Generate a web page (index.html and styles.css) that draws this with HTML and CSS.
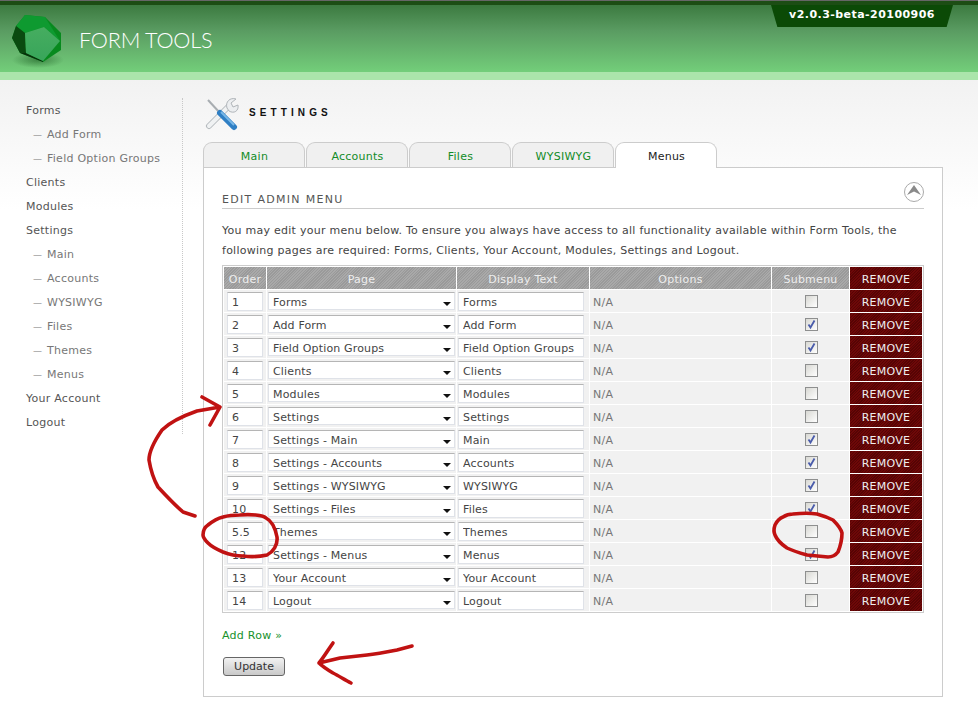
FILE: index.html
```html
<!DOCTYPE html>
<html lang="en">
<head>
<meta charset="utf-8">
<title>Form Tools - Settings</title>
<link rel="stylesheet" href="styles.css">
</head>
<body>
<header class="header">
  <svg class="logo" width="65" height="65" viewBox="5 8 65 65">
    <defs>
      <linearGradient id="face" x1="0" y1="0" x2="0" y2="1"><stop offset="0" stop-color="#46ad60"/><stop offset="1" stop-color="#38a55a"/></linearGradient>
      <radialGradient id="shade"><stop offset="0" stop-color="#0b4a12" stop-opacity=".5"/><stop offset="1" stop-color="#0b4a12" stop-opacity="0"/></radialGradient>
    </defs>
    <ellipse cx="38" cy="60" rx="26" ry="8" fill="url(#shade)"/>
    <polygon points="25,15 45,17 61,33 61,50 43,62 20,53 12,38 16,26" fill="#078a1e"/>
    <polygon points="25,15 45,17 60,41 44,27 25,33 16,26" fill="#0e9a30"/>
    <polygon points="16,26 25,33 26,53 20,53 12,38" fill="#0a4a10"/>
    <polygon points="26,53 43,61 43,62 20,53" fill="#07300a"/>
    <polygon points="25,33 44,27 60,41 43,61 26,53" fill="url(#face)"/>
  </svg>
  <div class="brand">FORM TOOLS</div>
  <div class="version">v2.0.3-beta-20100906</div>
</header>
<div class="strip"></div>
<main class="main">
  <nav class="side">
    <a class="nav">Forms</a>
    <a class="nav sub">Add Form</a>
    <a class="nav sub">Field Option Groups</a>
    <a class="nav">Clients</a>
    <a class="nav">Modules</a>
    <a class="nav">Settings</a>
    <a class="nav sub">Main</a>
    <a class="nav sub">Accounts</a>
    <a class="nav sub">WYSIWYG</a>
    <a class="nav sub">Files</a>
    <a class="nav sub">Themes</a>
    <a class="nav sub">Menus</a>
    <a class="nav">Your Account</a>
    <a class="nav">Logout</a>
  </nav>
  <section class="content">
    <div class="title-row">
      <svg class="tool-icon" width="34" height="34" viewBox="0 0 34 34">
        <path d="M4 29 L24 9" stroke="#b4b9bd" stroke-width="6" stroke-linecap="round"/>
        <path d="M4 29 L24 9" stroke="#f0f2f3" stroke-width="4" stroke-linecap="round"/>
        <path d="M22 11 C20 5 25 0 31 2 L26 6 L28 10 L33 8 C34 14 29 17 24 14 Z" fill="#eceef0" stroke="#b0b5b9" stroke-width="1"/>
        <path d="M3 3 L15 16" stroke="#a8adb1" stroke-width="2"/>
        <path d="M15 16 L29 30" stroke="#2f7fc4" stroke-width="6" stroke-linecap="round"/>
        <path d="M16 15 L29 28" stroke="#78b8e8" stroke-width="2"/>
      </svg>
      <h1 class="page-title">SETTINGS</h1>
    </div>
    <div class="tabs">
      <a class="tab">Main</a>
      <a class="tab">Accounts</a>
      <a class="tab">Files</a>
      <a class="tab">WYSIWYG</a>
      <a class="tab active">Menus</a>
    </div>
    <div class="panel">
      <div class="panel-head">
        <h2 class="panel-title">EDIT ADMIN MENU</h2>
        <svg class="up" width="22" height="22" viewBox="0 0 22 22">
          <circle cx="11" cy="11" r="9.5" fill="#fff" stroke="#aaa" stroke-width="1"/>
          <path d="M11 4 L18 14 L11 10.5 L4 14 Z" fill="#8a8a8a"/>
        </svg>
      </div>
      <p class="intro">You may edit your menu below. To ensure you always have access to all functionality available within Form Tools, the following pages are required: Forms, Clients, Your Account, Modules, Settings and Logout.</p>
      <table class="menu">
        <colgroup><col class="c1"><col class="c2"><col class="c3"><col class="c4"><col class="c5"><col class="c6"></colgroup>
        <thead>
          <tr><th>Order</th><th>Page</th><th>Display Text</th><th>Options</th><th>Submenu</th><th class="rm">REMOVE</th></tr>
        </thead>
        <tbody id="rows">
          <tr><td><input class="ord" value="1"></td><td><div class="sel"><select><option>Forms</option></select></div></td><td><input class="disp" value="Forms"></td><td class="na">N/A</td><td class="ck"><span class="box"></span></td><td class="rm">REMOVE</td></tr>
          <tr><td><input class="ord" value="2"></td><td><div class="sel"><select><option>Add Form</option></select></div></td><td><input class="disp" value="Add Form"></td><td class="na">N/A</td><td class="ck"><span class="box"><svg width="11" height="11" viewBox="0 0 11 11"><path d="M2.5 5.5 L4.5 8.5 L8.5 1.5" class="tick"/></svg></span></td><td class="rm">REMOVE</td></tr>
          <tr><td><input class="ord" value="3"></td><td><div class="sel"><select><option>Field Option Groups</option></select></div></td><td><input class="disp" value="Field Option Groups"></td><td class="na">N/A</td><td class="ck"><span class="box"><svg width="11" height="11" viewBox="0 0 11 11"><path d="M2.5 5.5 L4.5 8.5 L8.5 1.5" class="tick"/></svg></span></td><td class="rm">REMOVE</td></tr>
          <tr><td><input class="ord" value="4"></td><td><div class="sel"><select><option>Clients</option></select></div></td><td><input class="disp" value="Clients"></td><td class="na">N/A</td><td class="ck"><span class="box"></span></td><td class="rm">REMOVE</td></tr>
          <tr><td><input class="ord" value="5"></td><td><div class="sel"><select><option>Modules</option></select></div></td><td><input class="disp" value="Modules"></td><td class="na">N/A</td><td class="ck"><span class="box"></span></td><td class="rm">REMOVE</td></tr>
          <tr><td><input class="ord" value="6"></td><td><div class="sel"><select><option>Settings</option></select></div></td><td><input class="disp" value="Settings"></td><td class="na">N/A</td><td class="ck"><span class="box"></span></td><td class="rm">REMOVE</td></tr>
          <tr><td><input class="ord" value="7"></td><td><div class="sel"><select><option>Settings - Main</option></select></div></td><td><input class="disp" value="Main"></td><td class="na">N/A</td><td class="ck"><span class="box"><svg width="11" height="11" viewBox="0 0 11 11"><path d="M2.5 5.5 L4.5 8.5 L8.5 1.5" class="tick"/></svg></span></td><td class="rm">REMOVE</td></tr>
          <tr><td><input class="ord" value="8"></td><td><div class="sel"><select><option>Settings - Accounts</option></select></div></td><td><input class="disp" value="Accounts"></td><td class="na">N/A</td><td class="ck"><span class="box"><svg width="11" height="11" viewBox="0 0 11 11"><path d="M2.5 5.5 L4.5 8.5 L8.5 1.5" class="tick"/></svg></span></td><td class="rm">REMOVE</td></tr>
          <tr><td><input class="ord" value="9"></td><td><div class="sel"><select><option>Settings - WYSIWYG</option></select></div></td><td><input class="disp" value="WYSIWYG"></td><td class="na">N/A</td><td class="ck"><span class="box"><svg width="11" height="11" viewBox="0 0 11 11"><path d="M2.5 5.5 L4.5 8.5 L8.5 1.5" class="tick"/></svg></span></td><td class="rm">REMOVE</td></tr>
          <tr><td><input class="ord" value="10"></td><td><div class="sel"><select><option>Settings - Files</option></select></div></td><td><input class="disp" value="Files"></td><td class="na">N/A</td><td class="ck"><span class="box"><svg width="11" height="11" viewBox="0 0 11 11"><path d="M2.5 5.5 L4.5 8.5 L8.5 1.5" class="tick"/></svg></span></td><td class="rm">REMOVE</td></tr>
          <tr><td><input class="ord" value="5.5"></td><td><div class="sel"><select><option>Themes</option></select></div></td><td><input class="disp" value="Themes"></td><td class="na">N/A</td><td class="ck"><span class="box"></span></td><td class="rm">REMOVE</td></tr>
          <tr><td><input class="ord" value="12"></td><td><div class="sel"><select><option>Settings - Menus</option></select></div></td><td><input class="disp" value="Menus"></td><td class="na">N/A</td><td class="ck"><span class="box"><svg width="11" height="11" viewBox="0 0 11 11"><path d="M2.5 5.5 L4.5 8.5 L8.5 1.5" class="tick"/></svg></span></td><td class="rm">REMOVE</td></tr>
          <tr><td><input class="ord" value="13"></td><td><div class="sel"><select><option>Your Account</option></select></div></td><td><input class="disp" value="Your Account"></td><td class="na">N/A</td><td class="ck"><span class="box"></span></td><td class="rm">REMOVE</td></tr>
          <tr><td><input class="ord" value="14"></td><td><div class="sel"><select><option>Logout</option></select></div></td><td><input class="disp" value="Logout"></td><td class="na">N/A</td><td class="ck"><span class="box"></span></td><td class="rm">REMOVE</td></tr>
        </tbody>
      </table>
      <a class="add">Add Row »</a>
      <button class="update">Update</button>
    </div>
  </section>
</main>
<svg class="scribble" width="978" height="711" viewBox="0 0 978 711">
  <path d="M195 516 L183 512 C176 506 170 500 158 487 C154 480 151 472 149 460 C149 452 153 443 162 430 C168 424 177 418 197 411 L220 407 M202 397 L220 407 L210 425"/>
  <path d="M240 515 C250 514 263 515 266 518 C272 521 275 527 277 537 C278 545 273 552 267 555 C258 557 250 557 243 556 C236 556 228 554 223 552 C216 549 211 546 208 543 C204 539 203 537 203 535 C203 530 205 527 208 525 C213 521 219 518 223 517 C230 515 236 515 240 515"/>
  <path d="M793 514 C802 513 811 513 817 514 C824 516 829 518 833 520 C838 525 841 529 842 533 C842 540 840 547 838 552 C835 556 832 557 828 557 L807 555 C800 553 793 551 787 548 C781 544 777 540 775 535 C773 531 774 528 775 525 C777 521 780 518 783 517 C786 515 790 514 793 514"/>
  <path d="M412 646 L397 650 C387 652 377 654 367 655 L340 658 L319 663 M333 643 C328 650 324 657 319 663 C323 667 328 670 333 673 C339 676 345 680 351 683"/>
</svg>
</body>
</html>
```

FILE: styles.css
```css
* { box-sizing: border-box; }
html, body { margin: 0; padding: 0; }
body {
  width: 978px;
  height: 711px;
  overflow: hidden;
  position: relative;
  background: #fff;
  font-family: "DejaVu Sans", Verdana, sans-serif;
  font-size: 11px;
  letter-spacing: 0.26px;
  color: #444;
}
.header {
  height: 72px;
  position: relative;
  display: flex;
  align-items: center;
  border-top: 1px solid #666;
  background: linear-gradient(#1c4d14 0, #1c4d14 4px, #3c7a40 4px, #5a9c62 30px, #73ce7a 100%);
}
.logo { position: absolute; left: 5px; top: 7px; }
.brand {
  margin-left: 79px;
  margin-top: 6px;
  color: #fff;
  font-family: Lato, sans-serif;
  font-weight: 300;
  font-size: 21.6px;
  letter-spacing: -0.2px;
}
.version {
  position: absolute;
  left: 771px;
  top: 4px;
  width: 182px;
  height: 22px;
  background: #0b4a06;
  clip-path: polygon(0 0, 100% 0, 96.5% 100%, 3.5% 100%);
  color: #fff;
  font-weight: bold;
  font-size: 11px;
  letter-spacing: 0.45px;
  line-height: 19px;
  text-align: center;
}
.strip { height: 8px; background: #abe5ab; }
.main {
  display: flex;
  align-items: flex-start;
  padding-top: 18px;
  height: 631px;
  background: linear-gradient(#f2f2f2, #fff 130px);
}
.side {
  width: 183px;
  padding-left: 26px;
  border-right: 1px dotted #c8c8c8;
  display: flex;
  flex-direction: column;
}
.nav { height: 24px; line-height: 26px; color: #555; }
.nav.sub { padding-left: 21px; color: #777; }
.nav.sub::before { content: "— "; position: absolute; margin-left: -14px; font-size: 9px; }
.content { width: 740px; margin-left: 20px; }
.title-row { height: 44px; display: flex; align-items: flex-start; }
.tool-icon { margin-left: 2px; margin-top: -1px; }
.page-title {
  margin: 8px 0 0 10px;
  font-family: "Liberation Sans", Arial, sans-serif;
  font-size: 10px;
  font-weight: bold;
  letter-spacing: 4.1px;
  line-height: 14px;
  color: #111;
}
.tabs { display: flex; gap: 1px; height: 25px; position: relative; z-index: 1; }
.tab {
  width: 102px;
  height: 25px;
  padding-left: 1px;
  border: 1px solid #ccc;
  border-bottom: 0;
  border-radius: 9px 9px 0 0;
  background: #f0f0f0;
  color: #128c28;
  text-align: center;
  line-height: 27px;
}
.tab.active { height: 26px; background: #fff; color: #222; }
.panel {
  height: 530px;
  border: 1px solid #ccc;
  background: #fff;
  padding: 0 18px;
}
.panel-head {
  height: 41px;
  border-bottom: 1px solid #ccc;
  position: relative;
}
.panel-title {
  margin: 0;
  position: absolute;
  left: 0;
  top: 25px;
  font-size: 11px;
  font-weight: normal;
  letter-spacing: 1.3px;
  line-height: 14px;
  color: #555;
}
.up { position: absolute; right: -1px; top: 13px; }
.intro { margin: 12px 0 4px; line-height: 20px; color: #444; width: 690px; }
.menu {
  width: 702px;
  table-layout: fixed;
  border: 1px solid #ccc;
  border-spacing: 1px;
  background: #fff;
}
.c1 { width: 42px; } .c2 { width: 189px; } .c3 { width: 132px; }
.c4 { width: 181px; } .c5 { width: 77px; } .c6 { width: 72px; }
.menu th, .menu td {
  height: 22px;
  padding: 0;
  background-color: #f1f1f1;
  font-weight: normal;
}
.menu th {
  background-image: repeating-linear-gradient(135deg, #a9a9a9 0 1px, #9a9a9a 1px 2px);
  color: #eee;
  text-align: center;
  padding-top: 2px;
}
.menu .rm {
  background-color: #600606;
  background-image: repeating-linear-gradient(135deg, #6e0808 0 1px, #560404 1px 2px);
  color: #eee;
  text-align: center;
  padding-top: 2px;
}
.menu .na { padding: 2px 0 0 3px; color: #777; }
.ck { text-align: center; }
.ord, .disp, .sel select {
  font-family: "DejaVu Sans", Verdana, sans-serif;
  font-size: 11px;
  letter-spacing: 0.15px;
  color: #444;
  background: #fff;
  border: 1px solid #dfe2e8;
  border-top-color: #b5b5b5;
  border-radius: 0;
  outline: 0;
  height: 19px;
  padding: 2px 3px 0 4px;
  display: block;
}
.ord { width: 36px; margin-left: 3px; }
.disp { width: 126px; margin-left: 1px; }
.sel { position: relative; width: 187px; margin-left: 1px; }
.sel select { width: 187px; height: 18px; appearance: none; padding: 2px 4px 0; }
.sel::after {
  content: "";
  position: absolute;
  right: 4px;
  top: 10px;
  border: 4px solid transparent;
  border-top: 4px solid #111;
  border-bottom: 0;
}
.box {
  display: inline-block;
  width: 13px;
  height: 13px;
  border: 1px solid #8e8f8f;
  background: linear-gradient(135deg, #d8d8d3, #fff);
  vertical-align: middle;
  line-height: 0;
  margin-left: 1px;
}
.box svg { display: block; }
.tick { fill: none; stroke: #4a5cab; stroke-width: 1.8; }
.add { display: block; margin-top: 16px; height: 14px; line-height: 14px; color: #17912b; }
.update {
  display: block;
  margin: 14px 0 0 1px;
  width: 62px;
  height: 19px;
  padding: 0;
  border: 1px solid #666;
  border-radius: 3px;
  background: linear-gradient(#f2f2f2, #c9c9c9);
  font-family: "DejaVu Sans", Verdana, sans-serif;
  font-size: 11px;
  color: #333;
}
.scribble {
  position: absolute;
  left: 0;
  top: 0;
  pointer-events: none;
}
.scribble path {
  fill: none;
  stroke: #c01212;
  stroke-width: 3.6;
  stroke-linecap: round;
  stroke-linejoin: round;
}
```
